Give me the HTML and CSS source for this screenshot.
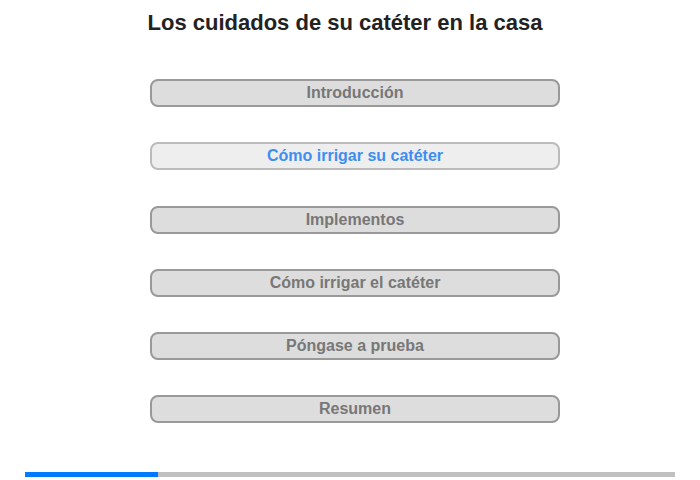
FILE: index.html
```html
<!DOCTYPE html>
<html lang="es">
<head>
    <meta charset="UTF-8">
    <title>Los cuidados de su catéter en la casa</title>
    <link rel="stylesheet" href="styles.css">
</head>
<body>
    <div class="page">
        <h1 class="title">Los cuidados de su catéter en la casa</h1>

        <div class="menu">
            <div class="menu-item">Introducción</div>
            <div class="menu-item active">Cómo irrigar su catéter</div>
            <div class="menu-item">Implementos</div>
            <div class="menu-item">Cómo irrigar el catéter</div>
            <div class="menu-item">Póngase a prueba</div>
            <div class="menu-item">Resumen</div>
        </div>

        <div class="progress">
            <div class="progress-fill" style="width: 20.5%"></div>
        </div>
    </div>
</body>
</html>
```

FILE: styles.css
```css
body { margin: 0; background-color: #fff; font-family: "Liberation Sans", Arial, sans-serif; }
.page { width: 700px; height: 480px; display: flex; flex-direction: column; }
.title { margin: 9px 0 0 0; padding-right: 10px; font-size: 22px; line-height: 28px; font-weight: bold; color: #222; text-align: center; }
.menu { margin: 42px 0 0 150px; width: 410px; display: flex; flex-direction: column; gap: 35.25px; }
.menu-item {
    height: 24px;
    line-height: 24px;
    border: 2px solid #999;
    border-radius: 8px;
    background-color: #ddd;
    color: #777;
    font-size: 16px;
    font-weight: bold;
    text-align: center;
}
.menu-item.active { background-color: #eee; border-color: #bbb; color: #3d8ef0; }
.progress { margin: 49px 25px 0 25px; height: 5px; background-color: #c0c0c0; }
.progress-fill { height: 100%; background-color: #007bff; }
```
